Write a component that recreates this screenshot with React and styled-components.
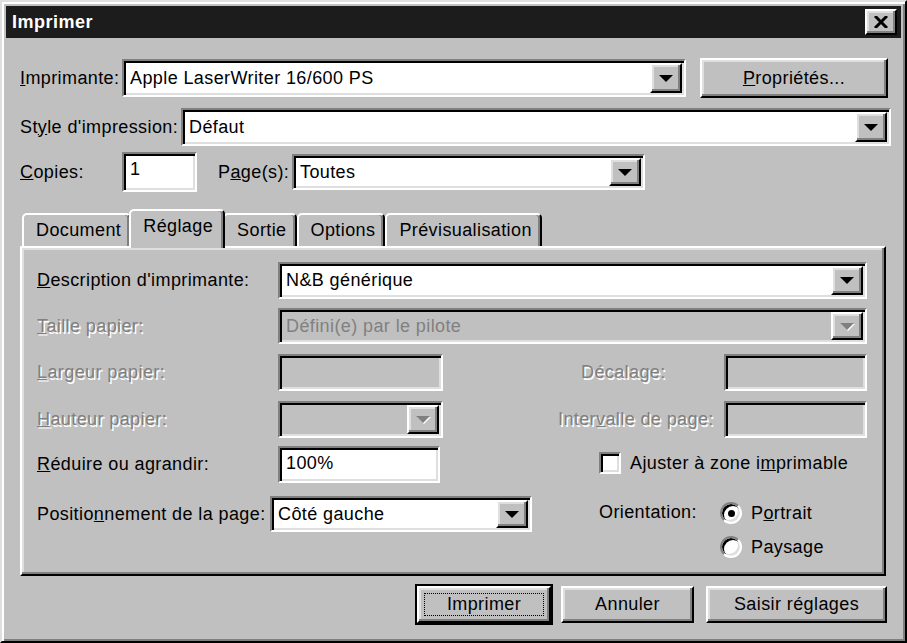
import React from "react";
import styled, { createGlobalStyle, css } from "styled-components";

const GlobalStyle = createGlobalStyle`
  html, body {
    margin: 0;
    padding: 0;
    background: #c0c0c0;
  }
  body {
    font-family: "Liberation Sans", Arial, sans-serif;
    font-size: 18px;
    letter-spacing: 0.4px;
    color: #000;
  }
`;

const raised = css`
  border: 2px solid;
  border-color: #fff #000 #000 #fff;
  box-shadow: inset -2px -2px #808080, inset 2px 2px #dfdfdf;
`;

const sunken = css`
  border: 2px solid;
  border-color: #808080 #fff #fff #808080;
  box-shadow: inset 2px 2px #000, inset -2px -2px #dfdfdf;
`;

const Window = styled.div`
  width: 907px;
  height: 643px;
  box-sizing: border-box;
  background: #c0c0c0;
  border: 2px solid;
  border-color: #dfdfdf #000 #000 #dfdfdf;
  box-shadow: inset 2px 2px #fff, inset -2px -2px #808080;
  padding: 4px;
  display: flex;
  flex-direction: column;
`;

const TitleBar = styled.div`
  height: 32px;
  background: #1c1c1c;
  display: flex;
  align-items: center;
  justify-content: space-between;
  padding: 0 4px 0 6px;
  flex-shrink: 0;
`;

const Title = styled.span`
  color: #fff;
  font-weight: bold;
  font-size: 18px;
  letter-spacing: 0.5px;
`;

const CloseButton = styled.div`
  ${raised};
  box-sizing: border-box;
  width: 32px;
  height: 26px;
  background: #c0c0c0;
  display: flex;
  align-items: center;
  justify-content: center;
`;

const Body = styled.div`
  display: flex;
  flex-direction: column;
  padding: 20px 10px 0 14px;
`;

const Row = styled.div`
  display: flex;
  align-items: center;
  margin-top: ${(p) => p.$mt || 0}px;
`;

const Label = styled.span`
  width: ${(p) => (p.$w ? `${p.$w}px` : "auto")};
  margin-left: ${(p) => p.$ml || 0}px;
  flex-shrink: 0;
  white-space: nowrap;
  ${(p) =>
    p.$disabled &&
    css`
      color: #808080;
      text-shadow: 1.5px 1.5px 0 #fff;
    `}
`;

const Field = styled.div`
  ${sunken};
  box-sizing: border-box;
  height: ${(p) => p.$h || 38}px;
  width: ${(p) => (p.$w ? `${p.$w}px` : "auto")};
  flex: ${(p) => (p.$w ? "0 0 auto" : "1 1 auto")};
  background: ${(p) => (p.$disabled ? "#c0c0c0" : "#fff")};
  color: ${(p) => (p.$disabled ? "#808080" : "#000")};
  display: flex;
  align-items: center;
  padding: 2px 2px 2px 6px;
  white-space: nowrap;
  overflow: hidden;
`;

const FieldText = styled.span`
  flex: 1;
  align-self: ${(p) => (p.$top ? "flex-start" : "center")};
  padding-top: ${(p) => (p.$top ? 3 : 0)}px;
`;

const ArrowButton = styled.div`
  ${raised};
  box-sizing: border-box;
  width: 32px;
  height: 100%;
  background: #c0c0c0;
  display: flex;
  align-items: center;
  justify-content: center;
  flex-shrink: 0;
`;

const Arrow = styled.div`
  width: 0;
  height: 0;
  border-left: 7px solid transparent;
  border-right: 7px solid transparent;
  border-top: 7px solid ${(p) => (p.$disabled ? "#808080" : "#000")};
  ${(p) => p.$disabled && "filter: drop-shadow(1px 1px 0 #fff);"}
`;

const Button = styled.div`
  ${raised};
  box-sizing: border-box;
  width: ${(p) => p.$w}px;
  height: ${(p) => p.$h || 38}px;
  background: #c0c0c0;
  display: flex;
  align-items: center;
  justify-content: center;
  margin-left: ${(p) => p.$ml || 0}px;
  flex-shrink: 0;
  position: relative;
  ${(p) =>
    p.$default &&
    css`
      outline: 2px solid #000;
      &::after {
        content: "";
        position: absolute;
        inset: 5px;
        border: 1px dotted #000;
      }
    `}
`;

const TabStrip = styled.div`
  display: flex;
  align-items: flex-end;
  height: 37px;
  margin-top: 17px;
  padding-left: 2px;
  position: relative;
  z-index: 1;
`;

const Tab = styled.div`
  box-sizing: border-box;
  height: ${(p) => (p.$active ? 39 : 33)}px;
  padding: 0 ${(p) => (p.$active ? 10 : 8)}px 0 12px;
  margin: 0 ${(p) => (p.$active ? -2 : 0)}px ${(p) => (p.$active ? -2 : 0)}px;
  border: 2px solid;
  border-bottom: none;
  border-color: #fff #000 transparent #fff;
  border-radius: 5px 5px 0 0;
  box-shadow: inset -2px 0 #808080;
  background: #c0c0c0;
  display: flex;
  align-items: ${(p) => (p.$active ? "flex-start" : "center")};
  padding-top: ${(p) => (p.$active ? 5 : 0)}px;
  position: relative;
  z-index: ${(p) => (p.$active ? 2 : 1)};
`;

const Panel = styled.div`
  ${raised};
  box-sizing: border-box;
  height: 330px;
  margin-right: 5px;
  padding: 14px 17px 0 15px;
  display: flex;
  flex-direction: column;
`;

const Split = styled.div`
  display: flex;
  justify-content: space-between;
  margin-top: ${(p) => p.$mt || 0}px;
`;

const Column = styled.div`
  display: flex;
  flex-direction: column;
  gap: ${(p) => p.$gap || 0}px;
`;

const Check = styled.span`
  ${sunken};
  box-sizing: border-box;
  width: 22px;
  height: 22px;
  background: #fff;
  display: inline-block;
  flex-shrink: 0;
`;

const Radio = styled.span`
  box-sizing: border-box;
  width: 22px;
  height: 22px;
  border-radius: 50%;
  border: 2px solid;
  border-color: #808080 #fff #fff #808080;
  box-shadow: inset 2px 2px #000, inset -2px -2px #dfdfdf;
  background: #fff;
  display: inline-flex;
  align-items: center;
  justify-content: center;
  flex-shrink: 0;
  &::after {
    content: "";
    width: 7px;
    height: 7px;
    border-radius: 50%;
    background: ${(p) => (p.$checked ? "#000" : "transparent")};
  }
`;

const Option = styled.div`
  display: flex;
  align-items: center;
  gap: ${(p) => p.$gap || 9}px;
`;

const Footer = styled.div`
  display: flex;
  justify-content: flex-end;
  margin-top: 10px;
  padding-right: 4px;
`;

function Combo({ text, w, h, disabled }) {
  return (
    <Field $w={w} $h={h} $disabled={disabled}>
      <FieldText>{text}</FieldText>
      <ArrowButton>
        <Arrow $disabled={disabled} />
      </ArrowButton>
    </Field>
  );
}

export default function App() {
  return (
    <>
      <GlobalStyle />
      <Window>
        <TitleBar>
          <Title>Imprimer</Title>
          <CloseButton>
            <svg width="14" height="12" viewBox="0 0 14 12">
              <path d="M1 0 L13 12 M13 0 L1 12" stroke="#000" strokeWidth="3" />
            </svg>
          </CloseButton>
        </TitleBar>
        <Body>
          <Row>
            <Label $w={102}>
              <u>I</u>mprimante:
            </Label>
            <Combo text="Apple LaserWriter 16/600 PS" w={564} />
            <Button $w={188} $h={40} $ml={14}>
              <span>
                <u>P</u>ropriétés...
              </span>
            </Button>
          </Row>
          <Row $mt={10}>
            <Label $w={161}>
              St<u>y</u>le d'impression:
            </Label>
            <Combo text="Défaut" />
          </Row>
          <Row $mt={6}>
            <Label $w={102}>
              <u>C</u>opies:
            </Label>
            <Field $w={75} $h={40}>
              <FieldText $top>1</FieldText>
            </Field>
            <Label $w={74} $ml={21}>
              P<u>a</u>ge(s):
            </Label>
            <Combo text="Toutes" w={353} h={36} />
          </Row>

          <TabStrip>
            <Tab>Document</Tab>
            <Tab $active>Réglage</Tab>
            <Tab>Sortie</Tab>
            <Tab>Options</Tab>
            <Tab>Prévisualisation</Tab>
          </TabStrip>
          <Panel>
            <Row>
              <Label $w={241}>
                <u>D</u>escription d'imprimante:
              </Label>
              <Combo text="N&B générique" h={37} />
            </Row>
            <Row $mt={9}>
              <Label $w={241} $disabled>
                <u>T</u>aille papier:
              </Label>
              <Combo text="Défini(e) par le pilote" h={36} disabled />
            </Row>
            <Split $mt={10}>
              <Row>
                <Label $w={241} $disabled>
                  <u>L</u>argeur papier:
                </Label>
                <Field $w={165} $h={37} $disabled />
              </Row>
              <Row>
                <Label $w={143} $disabled>
                  Décalage:
                </Label>
                <Field $w={143} $h={37} $disabled />
              </Row>
            </Split>
            <Split $mt={10}>
              <Row>
                <Label $w={241} $disabled>
                  <u>H</u>auteur papier:
                </Label>
                <Combo w={165} h={37} disabled />
              </Row>
              <Row>
                <Label $disabled $w={166}>
                  Inter<u>v</u>alle de page:
                </Label>
                <Field $w={143} $h={37} $disabled />
              </Row>
            </Split>
            <Split $mt={8}>
              <Column $gap={13}>
                <Row>
                  <Label $w={241}>
                    <u>R</u>éduire ou agrandir:
                  </Label>
                  <Field $w={162} $h={37}>
                    <FieldText $top>100%</FieldText>
                  </Field>
                </Row>
                <Row>
                  <Label $w={233}>
                    Positio<u>n</u>nement de la page:
                  </Label>
                  <Combo text="Côté gauche" w={262} h={36} />
                </Row>
              </Column>
              <Column $gap={28} style={{ width: 268, paddingTop: 6 }}>
                <Option>
                  <Check />
                  <span>
                    Ajuster à zone i<u>m</u>primable
                  </span>
                </Option>
                <Row style={{ alignItems: "flex-start" }}>
                  <Label $w={121}>Orientation:</Label>
                  <Column $gap={12}>
                    <Option>
                      <Radio $checked />
                      <span>
                        P<u>o</u>rtrait
                      </span>
                    </Option>
                    <Option>
                      <Radio />
                      <span>
                        Paysa<u>g</u>e
                      </span>
                    </Option>
                  </Column>
                </Row>
              </Column>
            </Split>
          </Panel>
          <Footer>
            <Button $w={134} $h={37} $default>
              Imprimer
            </Button>
            <Button $w={133} $h={37} $ml={10}>
              Annuler
            </Button>
            <Button $w={181} $h={37} $ml={12}>
              Saisir réglages
            </Button>
          </Footer>
        </Body>
      </Window>
    </>
  );
}
